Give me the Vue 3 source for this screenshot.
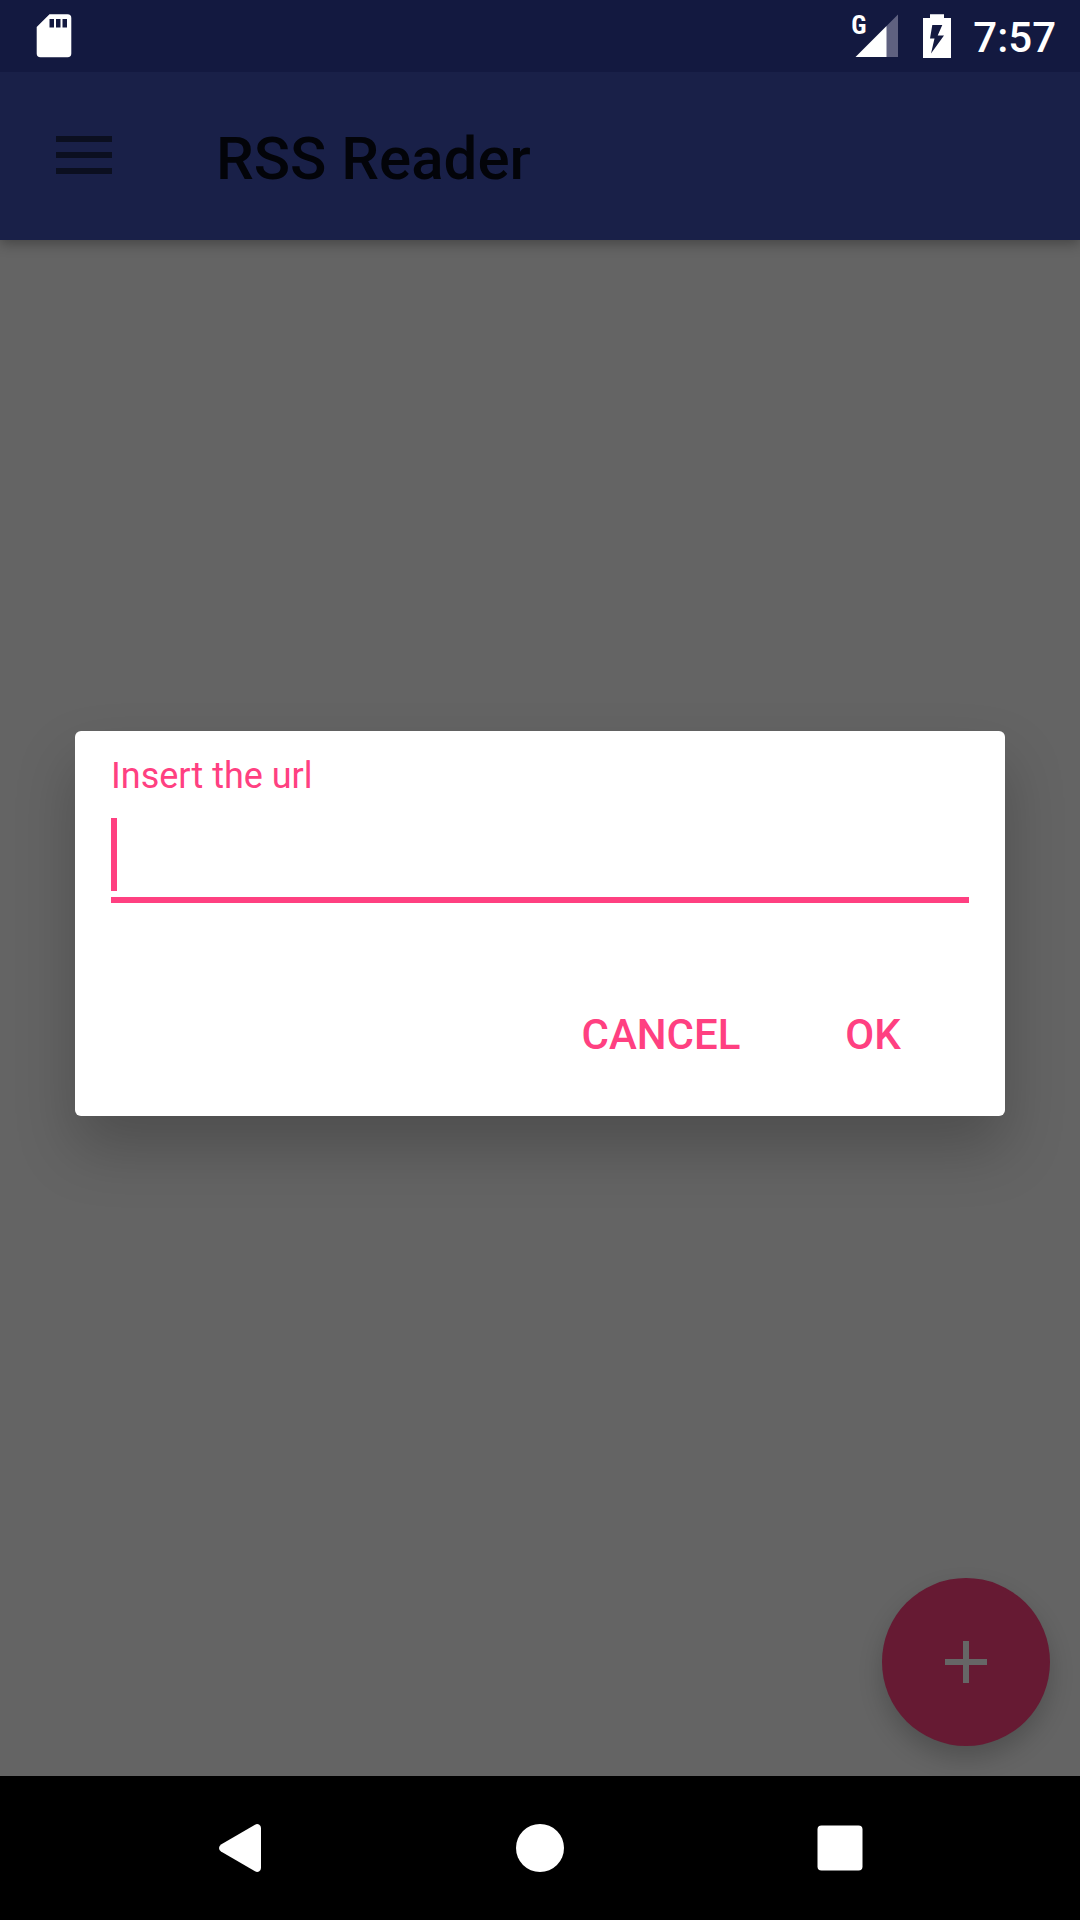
<script setup>
import { ref } from 'vue'

const url = ref('')
</script>

<template>
  <div class="screen">
    <header class="status">
      <svg class="sd" width="36" height="44" viewBox="0 0 36 44" aria-hidden="true">
        <path
          fill="#fff"
          fill-rule="evenodd"
          d="M13.5 0.3H31.500Q35.300 0.300 35.300 4V39.500Q35.300 43.300 31.500 43.300H4.500Q0.700 43.300 0.700 39.500V13ZM13.500 5H18V13.500H13.500ZM20 5H24.500V13.500H20ZM26.500 5H31V13.500H26.500Z"
        />
      </svg>
      <div class="signal">
        <span class="network">G</span>
        <svg width="44" height="44" viewBox="0 0 44 44" aria-hidden="true">
          <path fill="#5f6180" d="M43 0.500V43H31V12.500Z" />
          <path fill="#fff" d="M0.500 43L31.500 12V43Z" />
        </svg>
      </div>
      <svg class="battery" width="28" height="44" viewBox="0 0 28 44" aria-hidden="true">
        <path
          fill="#fff"
          fill-rule="evenodd"
          d="M7 0.300H21V4H28V44H0V4H7ZM9.300 11H19.300L14.700 21.500H21L8 39.500L11.500 24.500H7Z"
        />
      </svg>
      <time class="clock">7:57</time>
    </header>

    <div class="appbar">
      <button class="menu" type="button" aria-label="Open menu">
        <svg width="56" height="38" viewBox="0 0 56 38" aria-hidden="true">
          <path fill="#0b0f20" d="M0 0H56V6H0ZM0 16H56V22H0ZM0 32H56V38H0Z" />
        </svg>
      </button>
      <h1>RSS Reader</h1>
    </div>

    <main class="content">
      <button class="fab" type="button" aria-label="Add feed">
        <svg width="42" height="42" viewBox="0 0 42 42" aria-hidden="true">
          <path fill="#666" d="M18 0H24V18H42V24H24V42H18V24H0V18H18Z" />
        </svg>
      </button>
    </main>

    <nav class="system">
      <button type="button" aria-label="Back">
        <svg width="42" height="48" viewBox="0 0 42 48" aria-hidden="true">
          <path
            fill="#fff"
            d="M36 0.700Q38 -0.400 40 0.500Q42 1.500 42 4V44Q42 46.500 40 47.500Q38 48.400 36 47.300L2 27.500Q0 26 0 24Q0 22 2 20.500Z"
          />
        </svg>
      </button>
      <button type="button" aria-label="Home">
        <svg width="48" height="48" viewBox="0 0 48 48" aria-hidden="true">
          <circle cx="24" cy="24" r="24" fill="#fff" />
        </svg>
      </button>
      <button type="button" aria-label="Overview">
        <svg width="46" height="46" viewBox="0 0 46 46" aria-hidden="true">
          <rect x="0.500" y="0.500" width="45" height="45" rx="4" fill="#fff" />
        </svg>
      </button>
    </nav>

    <div class="overlay">
      <form class="dialog" role="dialog" aria-modal="true" @submit.prevent>
        <label for="feed-url">Insert the url</label>
        <div class="field">
          <span class="caret"></span>
          <input id="feed-url" v-model="url" type="text" autocomplete="off" />
        </div>
        <div class="actions">
          <button type="button">CANCEL</button>
          <button type="submit">OK</button>
        </div>
      </form>
    </div>
  </div>
</template>

<style>
body {
  margin: 0;
  background: #646464;
}
</style>

<style scoped>
.screen {
  position: relative;
  display: flex;
  flex-direction: column;
  min-height: 100vh;
  background: #646464;
  font-family: Roboto, 'Liberation Sans', sans-serif;
}

.screen * {
  box-sizing: border-box;
}

button {
  display: flex;
  align-items: center;
  justify-content: center;
  margin: 0;
  padding: 0;
  border: 0;
  background: none;
  font: inherit;
}

svg {
  display: block;
  flex: none;
}

.status {
  position: relative;
  z-index: 1;
  display: flex;
  align-items: center;
  height: 72px;
  padding: 0 24px 0 36px;
  background: #131940;
  color: #fff;
}

.signal {
  position: relative;
  margin-left: auto;
  margin-right: 24px;
}

.network {
  position: absolute;
  top: 0;
  left: -4px;
  font-family: 'Roboto Condensed', Roboto, sans-serif;
  font-size: 26px;
  font-weight: 700;
  line-height: 22px;
}

.clock {
  margin-left: 22px;
  padding-top: 4px;
  font-size: 42px;
  font-weight: 500;
  line-height: 48px;
}

.appbar {
  position: relative;
  display: flex;
  align-items: center;
  height: 168px;
  background: #192048;
  box-shadow: 0 4px 12px rgba(0, 0, 0, 0.3);
}

.menu {
  width: 168px;
  height: 166px;
  align-self: flex-start;
}

h1 {
  margin: 0;
  padding: 6px 0 0 48px;
  color: #030409;
  font-size: 60px;
  font-weight: 500;
  line-height: 72px;
}

.content {
  position: relative;
  flex: 1;
}

.fab {
  position: absolute;
  right: 30px;
  bottom: 30px;
  width: 168px;
  height: 168px;
  border-radius: 50%;
  background: #661a33;
  box-shadow: 0 12px 24px rgba(0, 0, 0, 0.2);
}

.system {
  position: relative;
  display: flex;
  height: 144px;
  padding: 0 calc(100% / 12);
  background: #000;
}

.system button {
  flex: 1;
}

.overlay {
  position: absolute;
  inset: 72px 0 145px;
  display: flex;
  align-items: center;
  justify-content: center;
  padding: 0 75px;
}

.dialog {
  width: 100%;
  padding: 23px 36px 10px;
  border-radius: 6px;
  background: #fff;
  box-shadow: 0 32px 60px rgba(0, 0, 0, 0.22);
  color: #ff4081;
}

label {
  display: block;
  font-size: 36px;
  line-height: 44px;
}

.field {
  display: flex;
  margin-top: 20px;
  padding-bottom: 6px;
  border-bottom: 6px solid #ff4081;
}

.caret {
  width: 6px;
  background: #ff4081;
}

input {
  flex: 1;
  min-width: 0;
  height: 73px;
  padding: 0;
  border: 0;
  outline: 0;
  background: none;
  color: #212121;
  font: inherit;
  font-size: 54px;
}

.actions {
  display: flex;
  justify-content: flex-end;
  gap: 20px;
  padding-top: 59px;
}

.actions button {
  min-width: 192px;
  height: 144px;
  color: #ff4081;
  font-size: 42px;
  font-weight: 500;
}
</style>
